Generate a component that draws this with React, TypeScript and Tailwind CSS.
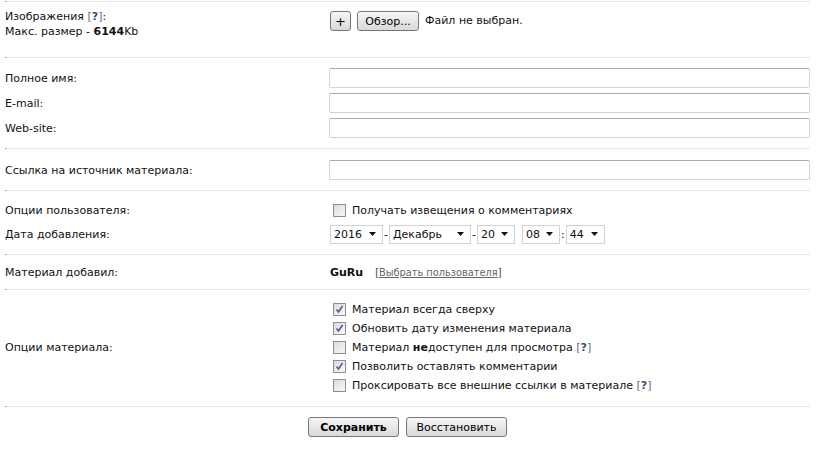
import React from "react";

const font = { fontFamily: '"DejaVu Sans", Verdana, sans-serif' };

function Separator() {
  return (
    <div className="flex h-px items-center">
      <span className="h-px w-px bg-[#777]" />
      <span className="h-px flex-1 bg-[#e6e9ef]" />
    </div>
  );
}

function Help() {
  return (
    <span className="text-[#5f6b7a]">
      [<span className="font-bold text-[#3b5078]">?</span>]
    </span>
  );
}

function Checkbox({ checked }: { checked?: boolean }) {
  return (
    <span className="relative inline-flex h-[13px] w-[13px] shrink-0 items-center justify-center border border-[#8f8f8f] bg-gradient-to-br from-[#dcdcdc] to-[#f8f8f8]">
      {checked && (
        <svg viewBox="0 0 11 11" className="h-[11px] w-[11px]">
          <path d="M2.5 5.5 L4.5 8 L8.5 2" fill="none" stroke="#4a5f8f" strokeWidth="1.6" />
        </svg>
      )}
    </span>
  );
}

function Select({ value, w }: { value: string; w: string }) {
  return (
    <span className={`flex h-[19px] items-center justify-between border border-[#cfd3d8] bg-white pl-[3px] pr-[6px] ${w}`}>
      <span>{value}</span>
      <svg viewBox="0 0 7 4" className="h-[4px] w-[7px]">
        <path d="M0 0 H7 L3.5 4 Z" fill="#111" />
      </svg>
    </span>
  );
}

function TextInput() {
  return <div className="h-[20px] w-[481px] shrink-0 rounded-[2px] border border-[#d0d3d7] border-t-[#a9abae]" />;
}

function Button({ children, className = "" }: { children: React.ReactNode; className?: string }) {
  return (
    <span
      className={`inline-flex h-[20px] items-center justify-center rounded-[3px] border border-[#777] bg-gradient-to-b from-[#f6f6f6] to-[#d9d9d9] text-[11px] text-black ${className}`}
    >
      {children}
    </span>
  );
}

export default function App() {
  return (
    <div className="h-[454px] w-[824px] bg-white text-[11px] leading-[15px] text-[#111]" style={font}>
      <div className="w-[810px] pl-[5px] pt-px">
        <Separator />

        <div className="flex h-[55px]">
          <div className="w-[324px] shrink-0 pt-[7px]">
            <div>
              Изображения <Help />:
            </div>
            <div>
              Макс. размер - <b>6144</b>Kb
            </div>
          </div>
          <div className="flex items-start gap-[6px] pl-px pt-[9px]">
            <Button className="w-[21px] text-[13px]">+</Button>
            <Button className="w-[62px] text-[10.5px]">Обзор...</Button>
            <span className="leading-[20px]">Файл не выбран.</span>
          </div>
        </div>

        <Separator />

        <div className="flex flex-col gap-[5px] pb-[10px] pt-[10px]">
          {["Полное имя:", "E-mail:", "Web-site:"].map((l) => (
            <div key={l} className="flex h-[20px] items-center">
              <div className="w-[324px] shrink-0">{l}</div>
              <TextInput />
            </div>
          ))}
        </div>

        <Separator />

        <div className="box-content flex h-[20px] items-center pb-[10px] pt-[11px]">
          <div className="w-[324px] shrink-0">Ссылка на источник материала:</div>
          <TextInput />
        </div>

        <Separator />

        <div className="flex flex-col gap-[4px] pb-[10px] pt-[9px]">
          <div className="flex h-[20px] items-center">
            <div className="w-[324px] shrink-0">Опции пользователя:</div>
            <div className="flex items-center gap-[6px] pl-[4px]">
              <Checkbox />
              <span>Получать извещения о комментариях</span>
            </div>
          </div>
          <div className="flex h-[20px] items-center">
            <div className="w-[324px] shrink-0">Дата добавления:</div>
            <div className="flex items-center pl-px">
              <Select value="2016" w="w-[53px]" />
              <span className="px-[1px]">-</span>
              <Select value="Декабрь" w="w-[82px]" />
              <span className="px-[1px]">-</span>
              <Select value="20" w="w-[38px]" />
              <span className="w-[7px]" />
              <Select value="08" w="w-[38px]" />
              <span className="px-[1px]">:</span>
              <Select value="44" w="w-[39px]" />
            </div>
          </div>
        </div>

        <Separator />

        <div className="flex h-[34px] items-center">
          <div className="w-[324px] shrink-0">Материал добавил:</div>
          <div className="flex items-center gap-[12px] pl-px">
            <b>GuRu</b>
            <span className="text-[9.8px] text-[#444]">
              [<span className="text-[#666] underline">Выбрать пользователя</span>]
            </span>
          </div>
        </div>

        <Separator />

        <div className="flex items-center pb-[11px] pt-[10px]">
          <div className="w-[324px] shrink-0">Опции материала:</div>
          <div className="flex flex-col pl-[4px]">
            {[
              { c: true, t: <>Материал всегда сверху</> },
              { c: true, t: <>Обновить дату изменения материала</> },
              {
                c: false,
                t: (
                  <>
                    Материал <b>не</b>доступен для просмотра <Help />
                  </>
                ),
              },
              { c: true, t: <>Позволить оставлять комментарии</> },
              {
                c: false,
                t: (
                  <>
                    Проксировать все внешние ссылки в материале <Help />
                  </>
                ),
              },
            ].map((r, i) => (
              <div key={i} className="flex h-[19px] items-center gap-[6px]">
                <Checkbox checked={r.c} />
                <span>{r.t}</span>
              </div>
            ))}
          </div>
        </div>

        <Separator />

        <div className="flex justify-center gap-[7px] pt-[10px]">
          <Button className="w-[91px] font-bold">Сохранить</Button>
          <Button className="w-[101px]">Восстановить</Button>
        </div>
      </div>
    </div>
  );
}
